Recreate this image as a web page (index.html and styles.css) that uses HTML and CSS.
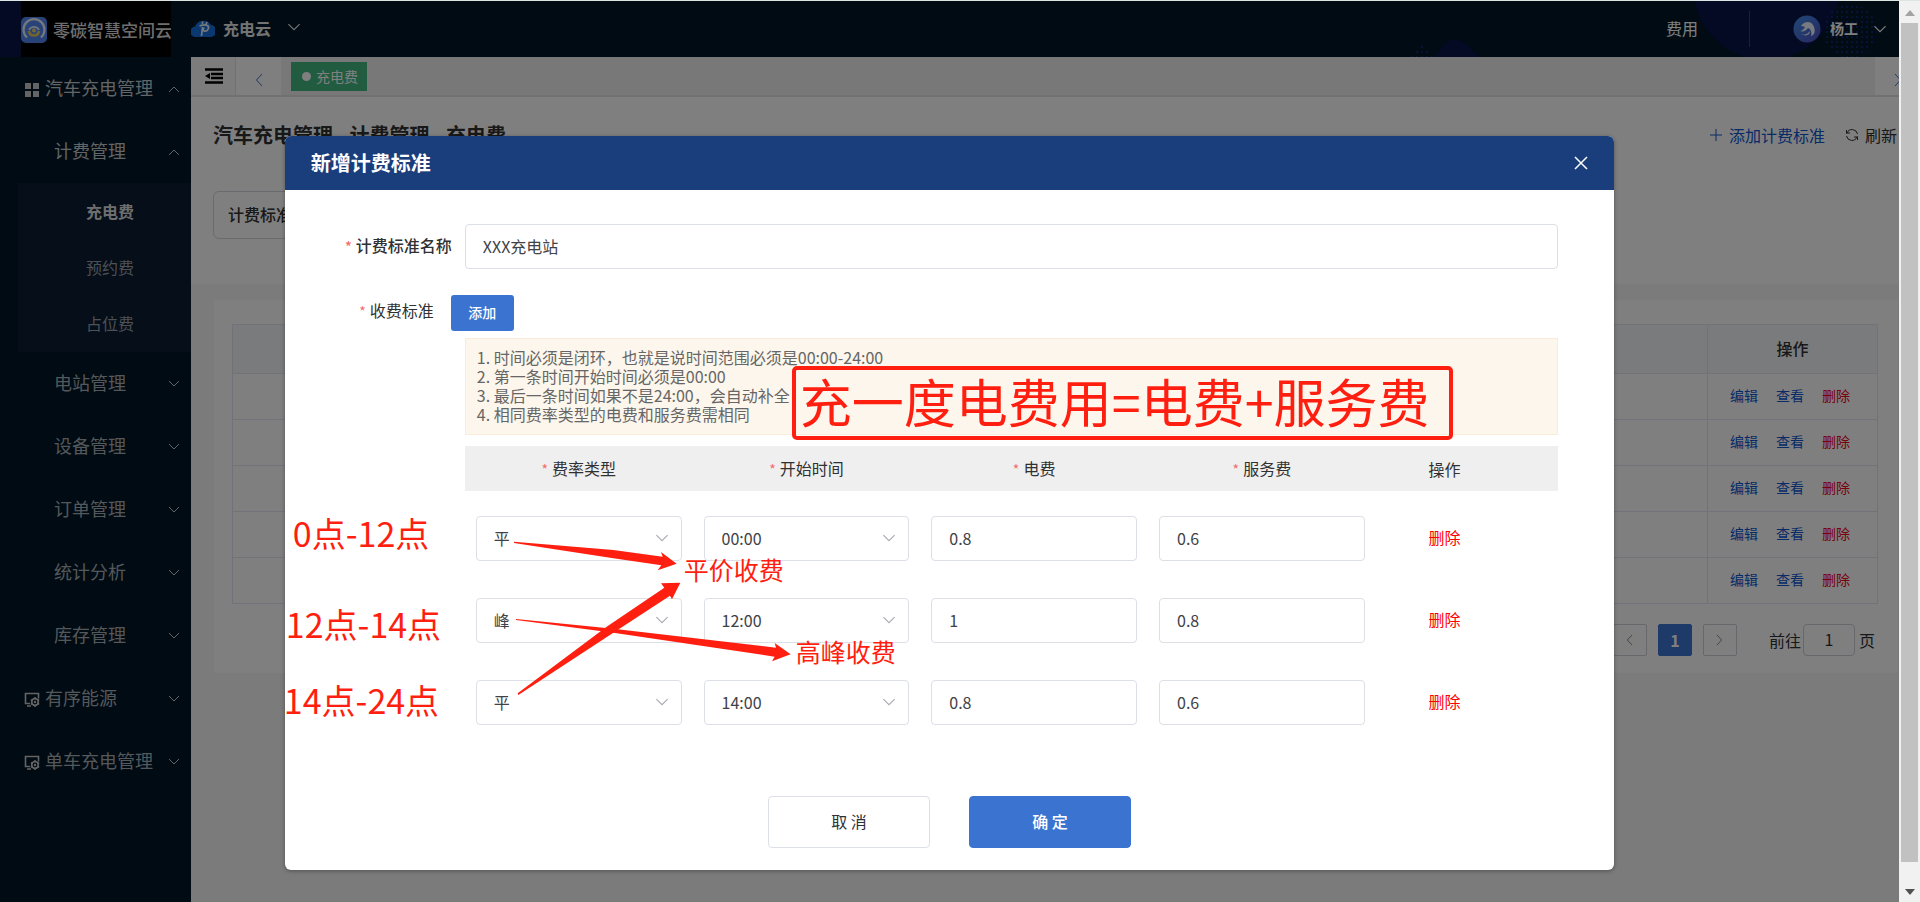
FILE: index.html
```html
<!DOCTYPE html>
<html lang="zh-CN">
<head>
<meta charset="utf-8">
<title>新增计费标准</title>
<link rel="stylesheet" href="styles.css">
</head>
<body>
<svg class="defs" aria-hidden="true">
  <symbol id="down" viewBox="0 0 12 8"><path d="M1 1l5 5 5-5" fill="none" stroke="currentColor"/></symbol>
  <symbol id="up" viewBox="0 0 12 8"><path d="M1 7l5-5 5 5" fill="none" stroke="currentColor"/></symbol>
  <symbol id="left" viewBox="0 0 8 14"><path d="M7 1L1.500 7 7 13" fill="none" stroke="currentColor"/></symbol>
  <symbol id="right" viewBox="0 0 8 14"><path d="M1 1l5.500 6L1 13" fill="none" stroke="currentColor"/></symbol>
  <symbol id="screen" viewBox="0 0 16 16"><path d="M6 12.500H1.500V2.500h13v5M3 15h4" fill="none" stroke="currentColor" stroke-width="1.600"/><circle cx="11" cy="11" r="3.300" fill="none" stroke="currentColor" stroke-width="1.700"/><circle cx="11" cy="11" r="1.200" fill="currentColor"/><path d="M11 6v2M11 14v2M6.800 8.600l1.500.9M13.700 12.500l1.500.9M6.800 13.400l1.500-.9M13.700 9.500l1.500-.9" stroke="currentColor" stroke-width="1.500"/></symbol>
</svg>
<div class="shell">
  <header class="topbar">
    <svg class="topbar-art" width="520" height="56" viewBox="1379 1 520 56" aria-hidden="true">
      <defs><pattern id="dots" width="5" height="5" patternUnits="userSpaceOnUse"><rect x="1" y="1" width="2" height="2" fill="#102270"/></pattern></defs>
      <circle cx="1766" cy="-13" r="73" fill="#081448"/>
      <path d="M1433 57C1443 48 1444 40 1455 40s14 8 25 17z" fill="#081448"/>
      <path d="M1409 57l13-15 12 15z" fill="url(#dots)"/>
      <circle cx="1850" cy="31" r="27" fill="url(#dots)"/>
    </svg>
    <div class="brand">
      <svg width="26" height="26" viewBox="0 0 26 26" aria-hidden="true"><rect width="26" height="26" rx="5" fill="#5187ee"/><path d="M6 20.500a10.500 10.500 0 1 1 14 0" fill="none" stroke="#e8eefc" stroke-width="2.200"/><path d="M8 13a5.500 5.500 0 0 1 10 0" fill="none" stroke="#dfe7fa" stroke-width="1.800"/><path d="M8 14c1 6 9 6 10 0" fill="none" stroke="#e9c958" stroke-width="2.500"/><circle cx="13" cy="13.500" r="2" fill="#e9d070"/></svg>
      <span>零碳智慧空间云</span>
    </div>
    <button class="product">
      <svg width="24" height="20" viewBox="0 0 24 20" aria-hidden="true"><path d="M5 19a5 5 0 0 1-1-10.500A9 9 0 0 1 20 7a6 6 0 0 1-1 12z" fill="#1771dc"/><path d="M11.500 6V3.500M15 6.500l1-2.500M8.500 8c3-1 5-2 8-.5 2.500 2 0 6.500-3.500 5.500-1.500-.5-1-2.500.5-3M11.500 9l-1 9" stroke="#e6f1ff" stroke-width="1.700" fill="none"/></svg>
      <span>充电云</span>
      <svg width="14" height="9"><use href="#down"/></svg>
    </button>
    <a class="fee" href="#">费用</a>
    <button class="user">
      <svg width="28" height="28" viewBox="0 0 28 28" aria-hidden="true"><defs><linearGradient id="av" x1="0" y1="0" x2="1" y2="1"><stop offset="0" stop-color="#3e92ee"/><stop offset="1" stop-color="#514fc0"/></linearGradient></defs><circle cx="14" cy="14" r="13.500" fill="url(#av)"/><path d="M8 11c3-5 10-5 12-1 3 5 2 10-2 11 1-3 0-7-3-8-2 3-5 4-8 3 2 0 4-2 5-4-2-1-3-1-4-1zM8 19c5 2 7-1 9-3 0 4-4 6-9 3z" fill="#eef4ff"/></svg>
      <span>杨工</span>
      <svg width="14" height="9"><use href="#down"/></svg>
    </button>
  </header>
  <div class="body">
    <nav class="side">
      <a class="item on" href="#"><svg width="16" height="16" viewBox="0 0 16 16"><path d="M1 2h6v6H1zM9 2h6v6H9zM1 10h6v6H1zM9 10h6v6H9z" fill="currentColor"/></svg><span>汽车充电管理</span><svg class="arr" width="12" height="8"><use href="#up"/></svg></a>
      <a class="item child on" href="#"><span>计费管理</span><svg class="arr" width="12" height="8"><use href="#up"/></svg></a>
      <div class="sub"><a class="cur" href="#">充电费</a><a href="#">预约费</a><a href="#">占位费</a></div>
      <a class="item child" href="#"><span>电站管理</span><svg class="arr" width="12" height="8"><use href="#down"/></svg></a>
      <a class="item child" href="#"><span>设备管理</span><svg class="arr" width="12" height="8"><use href="#down"/></svg></a>
      <a class="item child" href="#"><span>订单管理</span><svg class="arr" width="12" height="8"><use href="#down"/></svg></a>
      <a class="item child" href="#"><span>统计分析</span><svg class="arr" width="12" height="8"><use href="#down"/></svg></a>
      <a class="item child" href="#"><span>库存管理</span><svg class="arr" width="12" height="8"><use href="#down"/></svg></a>
      <a class="item" href="#"><svg width="16" height="16"><use href="#screen"/></svg><span>有序能源</span><svg class="arr" width="12" height="8"><use href="#down"/></svg></a>
      <a class="item" href="#"><svg width="16" height="16"><use href="#screen"/></svg><span>单车充电管理</span><svg class="arr" width="12" height="8"><use href="#down"/></svg></a>
    </nav>
    <main class="main">
      <div class="tabs">
        <button class="fold" aria-label="收起菜单"><svg width="18" height="16" viewBox="0 0 18 16"><path d="M0 1.500h18M6 6h12M6 10h12M0 14.500h18" stroke="#000" stroke-width="2.500"/><path d="M5 5v6L0 8z"/></svg></button>
        <button class="step" aria-label="向左"><svg width="8" height="14"><use href="#left"/></svg></button>
        <a class="tag" href="#"><i></i><span>充电费</span></a>
        <button class="step end" aria-label="向右"><svg width="8" height="14"><use href="#right"/></svg></button>
      </div>
      <section class="head">
        <div class="head-row">
          <h1>汽车充电管理 - 计费管理 - 充电费</h1>
          <a class="add" href="#"><svg width="14" height="14" viewBox="0 0 14 14"><path d="M7 1v12M1 7h12" stroke="currentColor"/></svg>添加计费标准</a>
          <a class="refresh" href="#"><svg width="14" height="14" viewBox="0 0 14 14"><path d="M1.500 5.500V2M1.500 5H5M2 5A5.500 5.500 0 0 1 12.500 6M12.500 8.500V12M12.500 9H9M12 9A5.500 5.500 0 0 1 1.500 8" fill="none" stroke="currentColor"/></svg>刷新</a>
        </div>
        <div class="filter">计费标准名称</div>
      </section>
      <section class="panel">
        <table class="list">
          <thead><tr><th></th><th>操作</th></tr></thead>
          <tbody>
            <tr><td></td><td><a href="#">编辑</a><a href="#">查看</a><a class="del" href="#">删除</a></td></tr>
            <tr><td></td><td><a href="#">编辑</a><a href="#">查看</a><a class="del" href="#">删除</a></td></tr>
            <tr><td></td><td><a href="#">编辑</a><a href="#">查看</a><a class="del" href="#">删除</a></td></tr>
            <tr><td></td><td><a href="#">编辑</a><a href="#">查看</a><a class="del" href="#">删除</a></td></tr>
            <tr><td></td><td><a href="#">编辑</a><a href="#">查看</a><a class="del" href="#">删除</a></td></tr>
          </tbody>
        </table>
        <div class="pager">
          <button aria-label="上一页"><svg width="7" height="12"><use href="#left"/></svg></button>
          <button class="now">1</button>
          <button aria-label="下一页"><svg width="7" height="12"><use href="#right"/></svg></button>
          <label for="goto">前往</label><input id="goto" value="1"><span>页</span>
        </div>
      </section>
    </main>
  </div>
  <div class="mask">
    <div class="dialog" role="dialog" aria-labelledby="dlg-title">
      <div class="dlg-head"><h2 id="dlg-title">新增计费标准</h2><button aria-label="关闭"><svg width="14" height="14" viewBox="0 0 14 14"><path d="M1 1l12 12M13 1L1 13" stroke="#fff" stroke-width="1.500"/></svg></button></div>
      <form class="form">
        <div class="row"><label class="req strong" for="name">计费标准名称</label><input id="name" class="box" value="XXX充电站"></div>
        <div class="row second"><span class="req">收费标准</span><button type="button" class="plus">添加</button></div>
        <div class="indent">
          <div class="note"><p>1. 时间必须是闭环，也就是说时间范围必须是00:00-24:00</p><p>2. 第一条时间开始时间必须是00:00</p><p>3. 最后一条时间如果不是24:00，会自动补全</p><p>4. 相同费率类型的电费和服务费需相同</p></div>
          <table class="rates">
            <thead><tr><th><span class="req">费率类型</span></th><th><span class="req">开始时间</span></th><th><span class="req">电费</span></th><th><span class="req">服务费</span></th><th class="op">操作</th></tr></thead>
            <tbody>
              <tr>
                <td><div class="pick"><select class="box" aria-label="费率类型"><option>平</option></select><svg width="14" height="9"><use href="#down"/></svg></div></td>
                <td><div class="pick"><select class="box" aria-label="开始时间"><option>00:00</option></select><svg width="14" height="9"><use href="#down"/></svg></div></td>
                <td><input class="box" aria-label="电费" value="0.8"></td><td><input class="box" aria-label="服务费" value="0.6"></td><td class="op"><a href="#">删除</a></td>
              </tr>
              <tr>
                <td><div class="pick"><select class="box" aria-label="费率类型"><option>峰</option></select><svg width="14" height="9"><use href="#down"/></svg></div></td>
                <td><div class="pick"><select class="box" aria-label="开始时间"><option>12:00</option></select><svg width="14" height="9"><use href="#down"/></svg></div></td>
                <td><input class="box" aria-label="电费" value="1"></td><td><input class="box" aria-label="服务费" value="0.8"></td><td class="op"><a href="#">删除</a></td>
              </tr>
              <tr>
                <td><div class="pick"><select class="box" aria-label="费率类型"><option>平</option></select><svg width="14" height="9"><use href="#down"/></svg></div></td>
                <td><div class="pick"><select class="box" aria-label="开始时间"><option>14:00</option></select><svg width="14" height="9"><use href="#down"/></svg></div></td>
                <td><input class="box" aria-label="电费" value="0.8"></td><td><input class="box" aria-label="服务费" value="0.6"></td><td class="op"><a href="#">删除</a></td>
              </tr>
            </tbody>
          </table>
        </div>
        <div class="actions"><button type="button">取 消</button><button type="button" class="ok">确 定</button></div>
      </form>
      <div class="marks">
        <svg class="arrows" width="520" height="320" viewBox="0 0 1560 960" aria-hidden="true"><g fill="#ff1f10">
          <path d="M222 365L520 390 668 410 663 396 710 431 653 451 664 436 520 415 222 369z"/>
          <path d="M233 820L500 620 673 503 663 490 721 488 696 538 690 527 520 638 235 825z"/>
          <path d="M228 597L520 626 1008 683 1004 669 1052 703 996 724 1004 710 520 638 228 600z"/>
        </g></svg>
        <span class="mark formula">充一度电费用=电费+服务费</span>
        <span class="mark range r1">0点-12点</span>
        <span class="mark range r2">12点-14点</span>
        <span class="mark range r3">14点-24点</span>
        <span class="mark kind k1">平价收费</span>
        <span class="mark kind k2">高峰收费</span>
      </div>
    </div>
  </div>
</div>
<div class="scroll" aria-hidden="true">
  <svg width="10" height="6" viewBox="0 0 10 6"><path d="M0 6l5-6 5 6z" fill="#a3a3a3"/></svg>
  <div class="thumb"></div>
  <svg width="10" height="6" viewBox="0 0 10 6"><path d="M0 0l5 6 5-6z" fill="#505050"/></svg>
</div>
</body>
</html>
```
FILE: styles.css
```css
* { box-sizing: border-box; }
body {
  margin: 0;
  height: 100vh;
  display: grid;
  grid-template-columns: 1fr 21px;
  border-top: 1px solid #dde5e3;
  font: 16px/24px "Noto Sans CJK SC", sans-serif;
  color: #303133;
  overflow: hidden;
}
a { color: inherit; text-decoration: none; }
button { font: inherit; color: inherit; border: 0; padding: 0; background: none; }
h1, h2, p { margin: 0; }
svg { flex: none; display: block; }
.defs { position: absolute; width: 0; height: 0; }

.shell { position: relative; display: flex; flex-direction: column; min-width: 0; overflow: hidden; }

.topbar {
  position: relative;
  display: flex;
  align-items: center;
  height: 56px;
  flex: none;
  background: linear-gradient(90deg, #081448 21px, #001626 21px);
  color: #fff;
}
.topbar-art { position: absolute; right: 0; top: 0; }
.topbar > * + * { position: relative; }
.brand { display: flex; align-items: center; gap: 6px; margin-left: 21px; width: 150px; height: 56px; padding-top: 2px; background: #000; font-size: 17px; font-weight: 500; white-space: nowrap; overflow: hidden; }
.brand span { color: #ddd; }
.product { display: flex; align-items: center; gap: 8px; margin-left: 20px; padding-bottom: 3px; font-weight: 700; color: #e8e8e8; }
.product svg:last-child { margin-left: 8px; }
.fee { margin-left: auto; padding: 0 51px 2px 0; line-height: 34px; border-right: 1px solid #34406a; }
.user { display: flex; align-items: center; margin: 0 12px 0 43px; font-size: 14px; font-weight: 700; }
.user span { margin: 0 15px 0 9px; padding-bottom: 3px; }

.body { flex: 1; display: flex; min-height: 0; }
.side { width: 191px; flex: none; background: #001626; color: #a9b0b6; font-size: 18px; }
.item { display: flex; align-items: center; height: 63px; padding: 0 11px 0 24px; gap: 5px; white-space: nowrap; }
.item span { padding-bottom: 3px; }
.item.child { padding-left: 54px; }
.item > svg:first-child { color: #c8c8c8; }
.arr { margin-left: auto; color: #c8c8c8; }
.item.on { color: #c4c8cc; }
.sub { margin-left: 18px; padding-bottom: 1px; background: #0a1c32; font-size: 16px; }
.sub a { display: block; line-height: 56px; padding-left: 68px; color: #9aa0a8; }
.sub .cur { font-weight: 700; color: #ddd; }

.main { flex: 1; min-width: 0; background: #f6f6f6; }
.tabs { display: flex; height: 40px; background: #f0f0f0; border-bottom: 2px solid #e2e2e2; overflow: hidden; }
.fold { width: 45px; background: #f8f8f8; display: flex; justify-content: center; padding: 11px 0 0 2px; border-right: 1px solid #e2e2e2; }
.step { width: 45px; background: #fff; color: #3b74d0; display: flex; justify-content: center; padding-top: 16px; }
.step.end { margin-left: auto; width: 24px; padding-left: 19px; justify-content: flex-start; overflow: hidden; }
.tag { display: flex; align-items: center; gap: 5px; height: 29px; margin: 5px 0 0 10px; padding: 0 9px 0 11px; background: #42b983; color: #fff; font-size: 14px; }
.tag span { padding-bottom: 2px; }
.tag i { width: 9px; height: 9px; border-radius: 50%; background: #fff; }
.head { background: #fff; height: 187px; padding: 26px 2px 0 22px; }
.head-row { display: flex; align-items: center; height: 24px; }
h1 { font-size: 20px; line-height: 24px; margin-right: auto; }
.add, .refresh { display: flex; align-items: center; gap: 6px; }
.add { color: #0f56cf; margin-right: 20px; }
.filter { margin-top: 44px; width: 360px; height: 48px; padding: 0 14px; line-height: 44px; border: 1px solid #d5d7dc; border-radius: 6px; font-weight: 500; }
.panel { margin: 16px 1px 0 23px; padding: 24px 20px 17px 18px; background: #fff; }
.list { width: 100%; border-collapse: collapse; table-layout: fixed; }
.list th, .list td { border: 1px solid #e4e7f0; height: 46px; padding: 0 0 3px; text-align: center; }
.list th { height: 49px; background: #f5f7fa; font-weight: 500; }
.list th:last-child { width: 170px; }
.list td:last-child { font-size: 14px; color: #0f56cf; padding-right: 5px; }
.list td a + a { margin-left: 18px; }
.list .del { color: #ee0018; }
.pager { display: flex; align-items: center; justify-content: flex-end; margin-top: 20px; padding-right: 3px; }
.pager button { display: flex; align-items: center; justify-content: center; width: 34px; height: 32px; margin-left: 11px; border: 1px solid #ccd0d6; border-radius: 2px; color: #777; }
.pager .now { background: #3b74d0; color: #fff; font-weight: 700; border-color: #3b74d0; }
.pager label { margin-left: 32px; }
.pager input { width: 52px; height: 32px; margin: 0 4px 0 2px; padding: 0 0 2px; border: 1px solid #ccd0d6; border-radius: 4px; font: inherit; text-align: center; color: inherit; }

.mask { position: absolute; inset: 0; background: rgba(0, 0, 0, .5); }
.dialog { position: relative; width: 70%; margin: 135px auto 0; background: #fff; border-radius: 6px; box-shadow: 0 1px 4px rgba(0, 0, 0, .35); }
.dlg-head { display: flex; align-items: center; justify-content: space-between; height: 54px; padding: 0 26px; background: #1a3d7c; color: #fff; border-radius: 6px 6px 0 0; }
h2 { font-size: 20px; }
.form { padding: 34px 56px 22px 0; }
.row { display: flex; align-items: center; }
.row > .req { width: 167px; text-align: right; margin-right: 13px; padding-bottom: 2px; flex: none; }
.row.second { align-items: flex-start; margin-top: 26px; }
.row.second > .req { width: 149px; margin-right: 17px; line-height: 30px; }
.req::before { content: "*"; color: #f56c6c; font-size: 14px; margin-right: 4px; }
.strong { font-weight: 500; }
.box { width: 100%; height: 45px; padding: 0 17px 2px; border: 1px solid #dcdfe6; border-radius: 4px; background: #fff; font: inherit; color: #404246; }
.plus { width: 63px; height: 36px; padding-bottom: 2px; border-radius: 3px; background: #3b74d0; color: #fff; font-size: 14px; font-weight: 500; }
.indent { margin: 7px 0 0 180px; }
.note { padding: 9px 11px 10px; border: 1px solid #faecd8; background: #fdf6ec; color: #666; line-height: 19px; margin-bottom: 11px; }
.rates { width: 100%; table-layout: fixed; border-collapse: collapse; }
.rates th { width: 20.83%; height: 45px; padding: 0; background: #efefef; font-weight: 400; }
.rates th.op { width: auto; }
.rates td { padding: 25px 11px 12px; }
.rates th.op, .rates td.op { padding-right: 45px; padding-left: 0; text-align: center; }
.rates td.op { color: #f00; padding-bottom: 15px; }
.pick { position: relative; }
.pick select { appearance: none; display: block; }
.pick svg { position: absolute; right: 13px; top: 18px; color: #a8abb2; pointer-events: none; }
.rates input { display: block; }
.actions { display: flex; justify-content: center; gap: 39px; margin: 59px -56px 0 0; }
.actions button { width: 162px; height: 52px; padding-bottom: 2px; border: 1px solid #dcdfe6; border-radius: 4px; }
.actions .ok { background: #3b74d0; border-color: #3b74d0; color: #fff; font-weight: 500; }

/* Free-hand notes drawn over the dialog */
.marks { position: absolute; inset: 0; pointer-events: none; color: #ff1f10; }
.mark, .arrows { position: absolute; white-space: nowrap; }
.arrows { left: 155px; top: 284px; }
.formula { left: 507px; top: 230px; width: 661px; height: 74px; padding-left: 4px; border: 4px solid #ff1f10; border-radius: 5px; font-size: 52px; line-height: 62px; }
.range { font-size: 34px; line-height: 40px; }
.r1 { left: 8px; top: 377px; }
.r2 { left: 1px; top: 468px; }
.r3 { left: -1px; top: 544px; }
.kind { font-size: 25px; line-height: 30px; }
.k1 { left: 399px; top: 418px; }
.k2 { left: 511px; top: 500px; }

.scroll { display: flex; flex-direction: column; align-items: center; justify-content: space-between; gap: 7px; padding: 9px 0 7px; background: #f1f1f1; }
.thumb { flex: 1; width: 17px; background: #c1c1c1; margin-bottom: 20px; }
```
